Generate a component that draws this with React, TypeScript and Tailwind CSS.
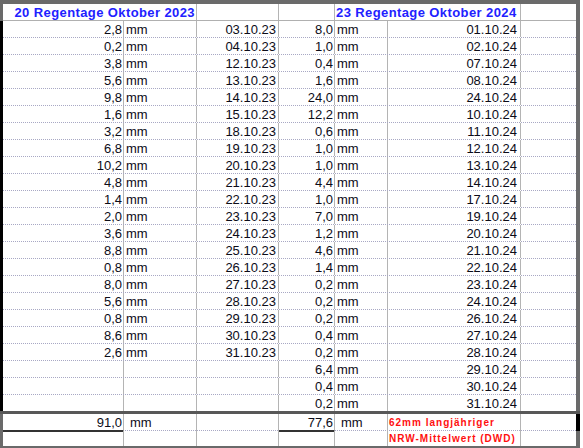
import React from 'react';

const data2023: [string, string][] = [
  ['2,8', '03.10.23'], ['0,2', '04.10.23'], ['3,8', '12.10.23'], ['5,6', '13.10.23'],
  ['9,8', '14.10.23'], ['1,6', '15.10.23'], ['3,2', '18.10.23'], ['6,8', '19.10.23'],
  ['10,2', '20.10.23'], ['4,8', '21.10.23'], ['1,4', '22.10.23'], ['2,0', '23.10.23'],
  ['3,6', '24.10.23'], ['8,8', '25.10.23'], ['0,8', '26.10.23'], ['8,0', '27.10.23'],
  ['5,6', '28.10.23'], ['0,8', '29.10.23'], ['8,6', '30.10.23'], ['2,6', '31.10.23'],
];

const data2024: [string, string][] = [
  ['8,0', '01.10.24'], ['1,0', '02.10.24'], ['0,4', '07.10.24'], ['1,6', '08.10.24'],
  ['24,0', '24.10.24'], ['12,2', '10.10.24'], ['0,6', '11.10.24'], ['1,0', '12.10.24'],
  ['1,0', '13.10.24'], ['4,4', '14.10.24'], ['1,0', '17.10.24'], ['7,0', '19.10.24'],
  ['1,2', '20.10.24'], ['4,6', '21.10.24'], ['1,4', '22.10.24'], ['0,2', '23.10.24'],
  ['0,2', '24.10.24'], ['0,2', '26.10.24'], ['0,4', '27.10.24'], ['0,2', '28.10.24'],
  ['6,4', '29.10.24'], ['0,4', '30.10.24'], ['0,2', '31.10.24'],
];

const cols = 'grid grid-cols-[121px_73px_82px_56px_53px_133px_55px]';
const cell = 'border-r border-[#b4b4b4] pt-[1px] leading-[15px] whitespace-nowrap overflow-hidden';

const App: React.FC = () => {
  return (
    <div className="w-[580px] h-[448px] bg-white font-['Liberation_Sans',Arial,sans-serif] text-[13px] text-[#0c0c18]">
      {/* top edge */}
      <div className="h-[4px] bg-[#6a6a6a]" />

      {/* header */}
      <div className="flex">
        <div className="w-[3px] bg-[#6a6a6a]" />
        <div className={`${cols} flex-1 h-[17px] border-b border-[#b0b0b0]`}>
          <div className={`${cell} col-span-2 text-right pr-[1px] font-bold text-[#2121ff] tracking-[0.4px]`}>
            20 Regentage Oktober 2023
          </div>
          <div className={cell} />
          <div className={cell} />
          <div className={`${cell} col-span-2 pl-[1px] font-bold text-[#2121ff] tracking-[0.4px]`}>
            23 Regentage Oktober 2024
          </div>
          <div />
        </div>
        <div className="w-[4px] bg-[#6a6a6a]" />
      </div>

      {/* data rows */}
      <div className="flex">
        <div className="w-[3px] bg-black" />
        <div className="flex-1">
          {data2024.map((r24, i) => {
            const r23 = data2023[i];
            const last = i === data2024.length - 1;
            return (
              <div
                key={i}
                className={`${cols} ${last ? 'h-[16px]' : 'h-[17px] border-b border-dotted border-[#a8a8c4]'}`}
              >
                <div className={`${cell} text-right pr-[1px]`}>{r23 ? r23[0] : ''}</div>
                <div className={`${cell} pl-[2px]`}>{r23 ? 'mm' : ''}</div>
                <div className={`${cell} text-right pr-[2px]`}>{r23 ? r23[1] : ''}</div>
                <div className={`${cell} text-right pr-[1px]`}>{r24[0]}</div>
                <div className={`${cell} pl-[2px]`}>mm</div>
                <div className={`${cell} text-right pr-[3px]`}>{r24[1]}</div>
                <div />
              </div>
            );
          })}
        </div>
        <div className="w-[4px] bg-[#6a6a6a]" />
      </div>

      {/* separator */}
      <div className="h-[3px] bg-[#585858]" />

      {/* totals */}
      <div className="flex">
        <div className="w-[3px] bg-[#6a6a6a]" />
        <div className={`${cols} flex-1 h-[17px] border-b border-dotted border-[#a8a8c4]`}>
          <div className="border-r border-b-2 border-r-[#b4b4b4] border-b-[#333] text-right pr-[1px] pt-[1px] leading-[15px]">91,0</div>
          <div className={`${cell} pl-[6px]`}>mm</div>
          <div className={cell} />
          <div className="border-r border-b-2 border-r-[#b4b4b4] border-b-[#333] text-right pr-[1px] pt-[1px] leading-[15px]">77,6</div>
          <div className={`${cell} pl-[6px]`}>mm</div>
          <div className="border-r border-[#b4b4b4] pl-[1px] pt-[2px] leading-[14px] text-[10px] font-bold tracking-[1px] text-[#ff1010] whitespace-nowrap">
            62mm langjähriger
          </div>
          <div />
        </div>
        <div className="w-[4px] bg-black" />
      </div>
      <div className="flex">
        <div className="w-[3px] bg-[#6a6a6a]" />
        <div className={`${cols} flex-1 h-[15px]`}>
          <div className={cell} />
          <div className={cell} />
          <div className={cell} />
          <div className={cell} />
          <div className={cell} />
          <div className="border-r border-[#b4b4b4] pl-[1px] pt-[1px] leading-[14px] text-[10px] font-bold tracking-[1px] text-[#ff1010] whitespace-nowrap">
            NRW-Mittelwert (DWD)
          </div>
          <div />
        </div>
        <div className="w-[4px] bg-[#6a6a6a]" />
      </div>

      {/* bottom edge */}
      <div className="h-[2px] bg-[#6a6a6a]" />
    </div>
  );
};

export default App;
